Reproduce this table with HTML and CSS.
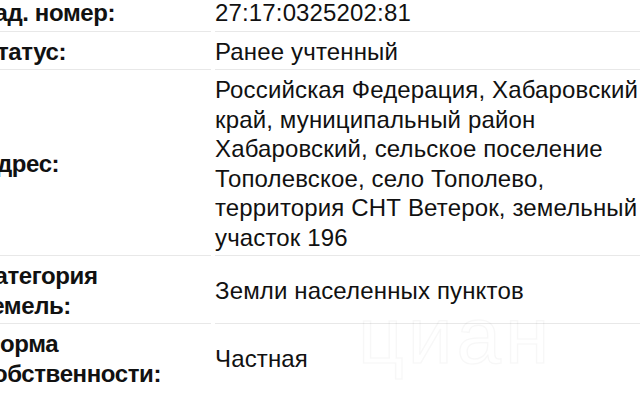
FILE: index.html
```html
<!DOCTYPE html>
<html lang="ru">
<head>
<meta charset="utf-8">
<link rel="stylesheet" href="styles.css">
</head>
<body>
<div class="sheet">
  <div class="props">
    <div class="cell label">Кад. номер:</div>
    <div class="cell value">27:17:0325202:81</div>
    <div class="cell label">Статус:</div>
    <div class="cell value">Ранее учтенный</div>
    <div class="cell label">Адрес:</div>
    <div class="cell value">Российская Федерация, Хабаровский край, муниципальный район Хабаровский, сельское поселение Тополевское, село Тополево, территория СНТ Ветерок, земельный участок 196</div>
    <div class="cell label">Категория земель:</div>
    <div class="cell value">Земли населенных пунктов</div>
    <div class="cell label">Форма собственности:</div>
    <div class="cell value">Частная</div>
  </div>
  <div class="watermark">циан</div>
</div>
</body>
</html>
```

FILE: styles.css
```css
html, body {
  margin: 0;
  padding: 0;
  background: #ffffff;
  overflow: hidden;
}

body {
  width: 640px;
  height: 402px;
  font-family: "Liberation Sans", Arial, sans-serif;
  color: #111111;
}

.sheet {
  position: relative;
  margin: -7px 0 0 -20px;
}

.props {
  display: grid;
  grid-template-columns: 231px 440px;
  column-gap: 4px;
}

.cell {
  display: flex;
  align-items: center;
  padding: 5px 0 3px;
  border-bottom: 1px solid #e8e8e8;
  font-size: 24px;
  line-height: 29.5px;
}

.label {
  font-weight: bold;
  letter-spacing: -0.4px;
  padding-right: 18px;
}

.value {
  letter-spacing: 0.15px;
}

.props > .cell:nth-last-child(-n+2) {
  border-bottom-color: transparent;
}

.watermark {
  position: absolute;
  left: 378px;
  top: 297px;
  font-size: 80px;
  letter-spacing: 4px;
  color: transparent;
  -webkit-text-stroke: 1.5px rgba(0, 0, 0, 0.03);
  pointer-events: none;
}
```
